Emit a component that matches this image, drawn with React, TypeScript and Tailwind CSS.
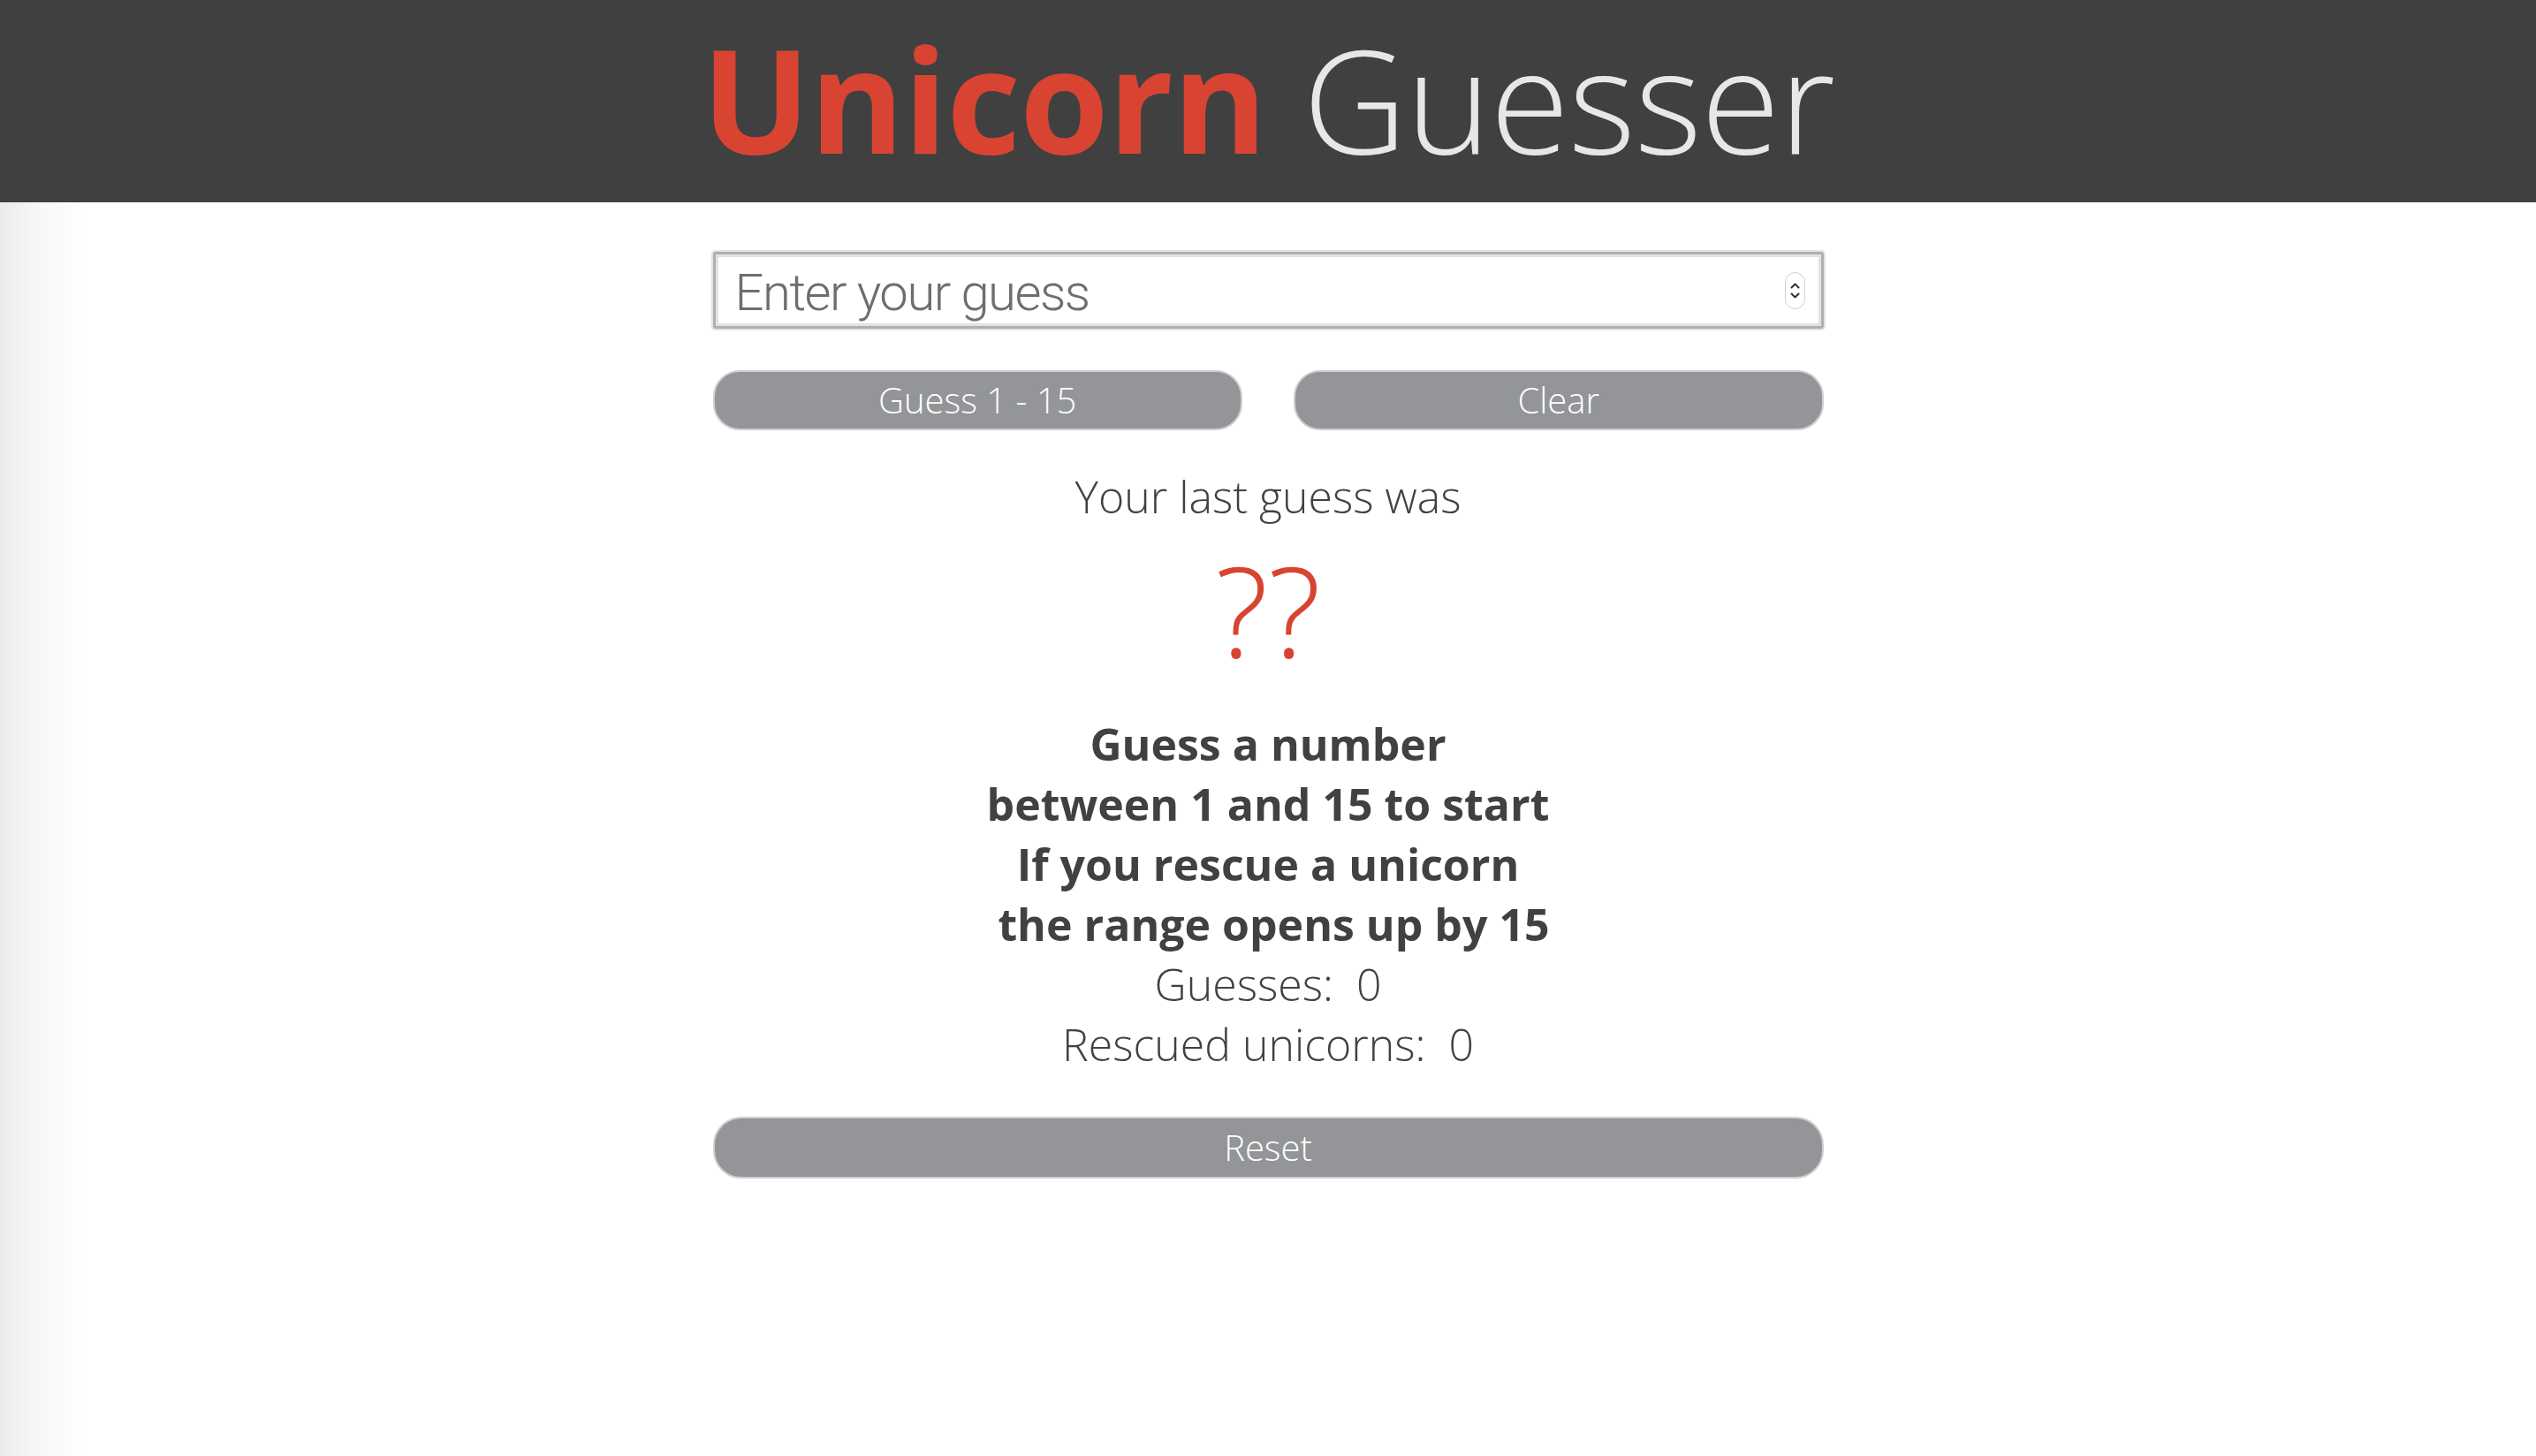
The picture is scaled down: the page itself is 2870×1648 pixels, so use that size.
import React from "react";

export default function App() {
  return (
    <div
      className="min-h-screen w-full bg-[linear-gradient(to_right,#ebebeb_0px,#f7f7f7_40px,#ffffff_100px)]"
      style={{ fontFamily: '"Open Sans", "Liberation Sans", sans-serif' }}
    >
      <header className="h-[229px] bg-[#404041] flex items-center justify-center">
        <h1 className="text-[163px] leading-none whitespace-nowrap -mt-[6px] [font-family:'Open_Sans',sans-serif]">
          <span className="font-bold text-[#d94432] tracking-[-1px]">Unicorn</span>
          <span className="font-light text-[#e6e7e8] tracking-[-1px]"> Guesser</span>
        </h1>
      </header>

      <main className="w-[1257px] mx-auto pt-[56px] flex flex-col items-stretch">
        <div className="relative h-[87px] rounded-[3px] border-[3px] border-[#b0b0b0] shadow-[0_0_0_2px_#e3e3e3,inset_0_0_0_3px_#e2e2e2] bg-white">
          <input
            type="number"
            autoFocus
            placeholder="Enter your guess"
            className="w-full h-full pl-[22px] pr-[60px] pt-[4px] bg-transparent outline-none text-[58px] font-light text-[#58595b] placeholder:text-[#6d6e71] caret-[#d94432] [appearance:textfield] [&::-webkit-inner-spin-button]:appearance-none [&::-webkit-outer-spin-button]:appearance-none [font-family:Roboto,'Liberation_Sans',sans-serif] tracking-[-1.5px]"
          />
          <div className="absolute right-[18px] top-[20px] w-[23px] h-[42px] rounded-full border border-[#d0d0d0] bg-white flex flex-col items-center justify-center gap-[4px]">
            <svg width="11" height="8" viewBox="0 0 11 8">
              <path d="M1.5 6.5 L5.5 2.5 L9.5 6.5" stroke="#333" strokeWidth="2" fill="none" strokeLinecap="round" strokeLinejoin="round" />
            </svg>
            <svg width="11" height="8" viewBox="0 0 11 8">
              <path d="M1.5 1.5 L5.5 5.5 L9.5 1.5" stroke="#333" strokeWidth="2" fill="none" strokeLinecap="round" strokeLinejoin="round" />
            </svg>
          </div>
        </div>

        <div className="mt-[47px] flex gap-[58px]">
          <button className="flex-1 h-[68px] rounded-[30px] bg-[#939598] border-2 border-[#cfcfd0] text-white text-[40px] font-light leading-none">
            Guess 1 - 15
          </button>
          <button className="flex-1 h-[68px] rounded-[30px] bg-[#939598] border-2 border-[#cfcfd0] text-white text-[40px] font-light leading-none">
            Clear
          </button>
        </div>

        <p className="mt-[39px] text-center text-[50px] font-light text-[#414042] leading-[72px]">
          Your last guess was
        </p>
        <p className="mt-[17px] text-center text-[142px] font-light text-[#d94432] leading-[150px]">
          ??
        </p>

        <div className="mt-[43px] text-center text-[50px] leading-[68px] text-[#414042] whitespace-pre">
          <p className="font-bold">Guess a number</p>
          <p className="font-bold">between 1 and 15 to start</p>
          <p className="font-bold">If you rescue a unicorn</p>
          <p className="font-bold"> the range opens up by 15</p>
          <p className="font-light">Guesses:  0</p>
          <p className="font-light">Rescued unicorns:  0</p>
        </div>

        <button className="mt-[48px] h-[70px] w-full rounded-[32px] bg-[#939598] border-2 border-[#cfcfd0] text-white text-[40px] font-light leading-none">
          Reset
        </button>
      </main>
    </div>
  );
}
